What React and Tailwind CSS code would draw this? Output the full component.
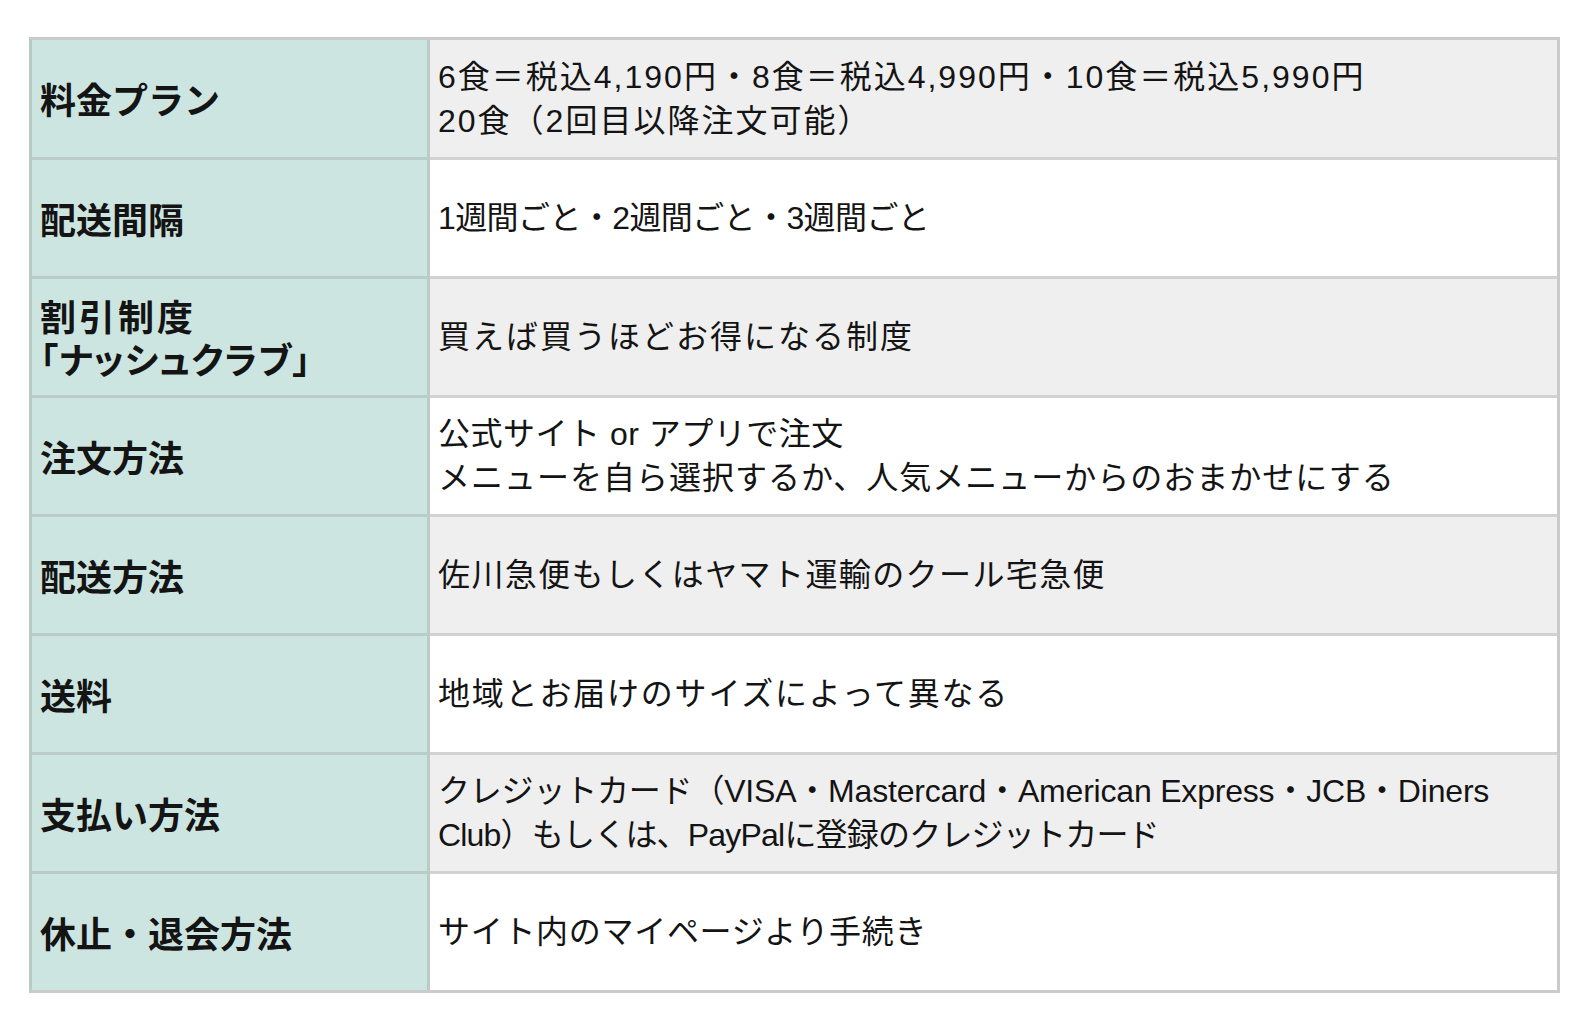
const rows = [
  {
    label: [["料金プラン", ""]],
    value: [
      ["6食＝税込4,190円・8食＝税込4,990円・10食＝税込5,990円", "tracking-[2px]"],
      ["20食（2回目以降注文可能）", "tracking-[2px]"],
    ],
  },
  { label: [["配送間隔", ""]], value: [["1週間ごと・2週間ごと・3週間ごと", "tracking-[-0.6px]"]] },
  {
    label: [
      ["割引制度", "tracking-[3px]"],
      ["「ナッシュクラブ」", "[font-feature-settings:'palt'] tracking-[1px]"],
    ],
    value: [["買えば買うほどお得になる制度", "tracking-[2px]"]],
  },
  {
    label: [["注文方法", ""]],
    value: [
      ["公式サイト or アプリで注文", "tracking-[0.5px]"],
      ["メニューを自ら選択するか、人気メニューからのおまかせにする", "tracking-[1px]"],
    ],
  },
  { label: [["配送方法", ""]], value: [["佐川急便もしくはヤマト運輸のクール宅急便", "tracking-[1.4px]"]] },
  { label: [["送料", ""]], value: [["地域とお届けのサイズによって異なる", "tracking-[1.8px]"]] },
  {
    label: [["支払い方法", ""]],
    value: [
      ["クレジットカード（VISA・Mastercard・American Express・JCB・Diners", "tracking-[-0.2px]"],
      ["Club）もしくは、PayPalに登録のクレジットカード", "tracking-[-0.8px]"],
    ],
  },
  { label: [["休止・退会方法", ""]], value: [["サイト内のマイページより手続き", "tracking-[0.7px]"]] },
];

export default function App() {
  return (
    <div className="min-h-[1028px] w-[1586px] bg-white pt-[37px] pl-[29px] text-[#141414] font-['Liberation_Sans','Noto_Sans_CJK_JP',sans-serif]">
      <div className="w-[1531px] border-[3px] border-[#cbcbcb] border-l-[#b8cbc6]">
        {rows.map((row, i) => (
          <div
            key={i}
            className={`grid grid-cols-[398px_1fr] ${i > 0 ? "h-[119px]" : "h-[117px]"}`}
          >
            {/* label cell */}
            <div
              className={`bg-[#cde5e0] border-r-[3px] border-[#b9ccc7] flex flex-col justify-center pl-[8px] font-bold text-[36px] leading-[43px] font-['Noto_Sans_CJK_JP',sans-serif] ${
                i > 0 ? "border-t-[3px]" : ""
              }`}
            >
              {row.label.map(([t, tr], j) => (
                <div key={j} className={`whitespace-nowrap ${tr}`}>{t}</div>
              ))}
            </div>
            {/* value cell */}
            <div
              className={`flex flex-col justify-center pl-[8px] text-[32px] leading-[44px] border-[#d2d2d2] ${
                i > 0 ? "border-t-[3px]" : ""
              } ${i % 2 === 0 ? "bg-[#efefef]" : "bg-white"}`}
            >
              {row.value.map(([t, tr], j) => (
                <div key={j} className={`whitespace-nowrap ${tr}`}>{t}</div>
              ))}
            </div>
          </div>
        ))}
      </div>
    </div>
  );
}
